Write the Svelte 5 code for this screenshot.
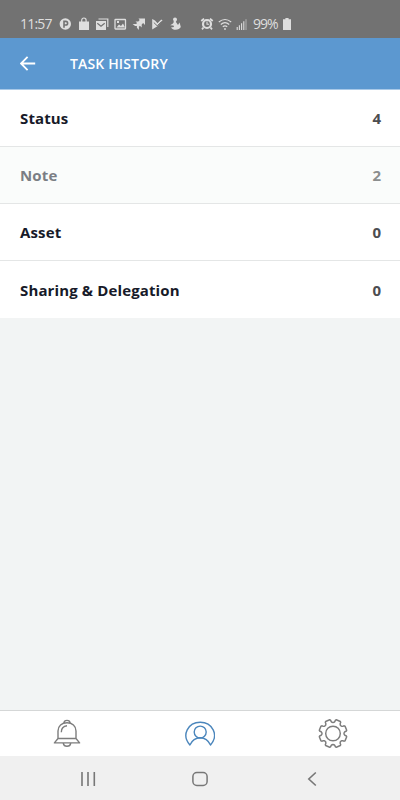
<script>
  const rows = [
    { name: 'Status', count: 4 },
    { name: 'Note', count: 2, pressed: true },
    { name: 'Asset', count: 0 },
    { name: 'Sharing & Delegation', count: 0 }
  ];

  // Cog outline: eight teeth separated by rounded valleys.
  const steps = [[-12, 13.6], [-9, 14.1], [9, 14.1], [12, 13.6], [14, 12], [18, 11.2], [22.5, 11], [27, 11.2], [31, 12]];
  const gear = Array.from({ length: 8 }, (_, i) =>
    steps.map(([a, r]) => {
      const t = ((i * 45 + 22.5 + a) * Math.PI) / 180;
      return `${(15 + r * Math.sin(t)).toFixed(2)},${(14.5 - r * Math.cos(t)).toFixed(2)}`;
    }).join(' ')
  ).join(' ');
</script>

<main class="screen">
  <div class="status">
    <span class="time">11:57</span>
    <svg class="notes" width="126" height="14" viewBox="0 0 126 14" fill="#dedede">
      <circle cx="6.3" cy="7" r="5.7" />
      <path d="M5 10.8V4.4h1.8a1.8 1.8 0 010 3.6H5" fill="none" stroke="#727272" stroke-width="1.6" />
      <path d="M20 4.5h10V13H20z" /><path d="M22.7 5V3.2a2.2 2.2 0 014.4 0v2" fill="none" stroke="#dedede" stroke-width="1.2" />
      <path d="M39.5 2h9.3v8" fill="none" stroke="#dedede" stroke-width="1.2" />
      <path d="M37 4h10v9H37z" /><path d="M38.3 6.3l3.7 3 3.7-3" fill="none" stroke="#727272" stroke-width="1.2" />
      <rect x="56" y="2.5" width="10.5" height="9.5" rx=".5" fill="none" stroke="#dedede" stroke-width="1.3" />
      <path d="M57.5 10.5l2.5-3 2 1.6 2-2.6 2 4zM58 4h2v2h-2z" />
      <path d="M79.5 1.5H86V8l-1.9-1.9-1.4 1.4v3l-1.8-1.8-1 1V13l-2-2.3V8.9h-1.8L73.6 7h3.5l1-1-1.6-1.6h2.8l1.4-1.4z" />
      <path d="M93.2 2l2.8 1.6 2.5 2.6 3.8-3.8 1.2 1.2L98.8 9 93.2 12.6z" /><path d="M94.8 5.5l3.4 3.3 4.5-4.3" fill="none" stroke="#727272" stroke-width="1" />
      <path d="M114 2.5a2 2 0 014 0c0 1.2-.7 1.7-1.2 2.3l2.2 3.2 1.6-2.5 1.2 4.5c-1.2 3-7.6 4-9.8.4l3-.4-.5-1.6-3.3-.2 2.7-1.8c1-.7 1.2-2.1.1-3.9z" />
    </svg>
    <svg class="signals" width="48" height="14" viewBox="0 0 48 14" fill="none" stroke="#dedede">
      <circle cx="7" cy="7" r="4" stroke-width="2.2" /><path d="M7 4.5V7.3h2" stroke-width="1.1" />
      <path d="M1.3 4L4 1.6M10 1.6L12.7 4M3.5 10.5L2 12.3M10.5 10.5l1.5 1.8" stroke-width="1.8" />
      <path d="M18.8 5q6.2-5 12.4 0M20.8 7.5q4.2-3.6 8.4 0M22.8 9.8q2.2-2 4.4 0" stroke-width="1.2" />
      <circle cx="25" cy="12" r=".9" fill="#dedede" stroke="none" />
      <path d="M37.2 10v3M39.4 8.3V13M41.6 6.3V13M43.8 4.3V13" stroke-width="1.1" /><path d="M46 2.2V13" stroke-width="1" opacity=".6" />
    </svg>
    <span class="battery">99%</span>
    <svg class="cell" width="8" height="12" viewBox="0 0 8 12" fill="#dedede"><path d="M2.4 0h3.2v1.2H8V12H0V1.2h2.4z" /></svg>
  </div>

  <header>
    <svg width="16" height="15" viewBox="0 0 16 15" fill="none" stroke="#fff" stroke-width="1.8"><path d="M15.2 7.5H1.2M7.6 .8L1 7.5l6.6 6.7" /></svg>
    <h1>TASK HISTORY</h1>
  </header>

  <section>
    {#each rows as row}
      <div class="row" class:pressed={row.pressed}>
        <span>{row.name}</span><span class="count">{row.count}</span>
      </div>
    {/each}
  </section>

  <nav class="tabs">
    <svg width="30" height="30" viewBox="0 0 30 30" fill="none" stroke="#7d7d7d" stroke-width="1.4" stroke-linejoin="round">
      <path d="M12 3.8C12.2.5 17.8.5 18 3.8M6 19.5V12C6 7 9.8 3.8 15 3.8S24 7 24 12v7.5l3.6 4.4H2.4L6 19.500zM6 19.500h18M11.3 24.300c.6 4 6.800 4 7.400 0M9.300 13.200C9.300 9.200 11.500 7.200 15 6.800" />
    </svg>
    <svg width="30" height="30" viewBox="0 0 30 30" fill="none" stroke="#4b86bc" stroke-width="1.4" stroke-linejoin="round">
      <circle cx="15.2" cy="13.1" r="6" /><path d="M4.900 26C-4 16 3.200 3.200 15.200 3.200S34.400 16 25.500 26C21 16.300 9.400 16.300 4.900 26z" />
    </svg>
    <svg width="30" height="30" viewBox="0 0 30 30" fill="none" stroke="#7d7d7d" stroke-width="1.45" stroke-linejoin="round">
      <polygon points={gear} /><circle cx="15" cy="14.5" r="7.3" />
    </svg>
  </nav>

  <div class="system">
    <svg width="16" height="16" viewBox="0 0 16 16" fill="none" stroke="#777" stroke-width="1.6"><path d="M2 1v14M8 1v14M14.3 1v14" /></svg>
    <svg width="16" height="16" viewBox="0 0 16 16" fill="none" stroke="#777" stroke-width="1.5"><rect x=".9" y="1.5" width="14.2" height="13" rx="4" /></svg>
    <svg width="16" height="16" viewBox="0 0 16 16" fill="none" stroke="#777" stroke-width="1.6"><path d="M11.8 1.500L4.800 8l7 6.500" /></svg>
  </div>
</main>

<style>
  .screen {
    width: 400px;
    height: 800px;
    display: flex;
    flex-direction: column;
    background: #f2f4f4;
    font-family: "Open Sans", sans-serif;
    overflow: hidden;
  }
  svg { display: block; flex: none; }
  .status {
    box-sizing: border-box;
    height: 38px;
    padding: 10px 0 0 20px;
    display: flex;
    align-items: center;
    background: #727272;
    color: #dedede;
    font: 14px/20px "Open Sans", sans-serif;
  }
  .time { width: 39px; letter-spacing: -0.8px; }
  .notes { margin-top: -1px; }
  .signals { margin: -1px 0 0 15px; }
  .battery { width: 34px; box-sizing: border-box; padding-left: 5px; font-size: 14px; letter-spacing: -1px; white-space: nowrap; }
  .cell { margin: -1px 0 0 1px; }
  header {
    box-sizing: border-box;
    height: 52px;
    padding-left: 20px;
    display: flex;
    align-items: center;
    background: #5c98d0;
    border-bottom: 1px solid #a9c9e8;
  }
  h1 {
    margin: 0 0 0 34px;
    color: #fff;
    font: 600 14px/20px "Open Sans", sans-serif;
    letter-spacing: 0.15px;
  }
  .row {
    box-sizing: border-box;
    height: 57px;
    padding: 0 19px 0 20px;
    display: flex;
    justify-content: space-between;
    align-items: center;
    background: #fff;
    border-bottom: 1px solid #e4e6e6;
    color: #171a29;
    font-size: 15px;
    font-weight: 700;
    line-height: 20px;
    letter-spacing: 0.13px;
  }
  .row:last-child { border-bottom: 0; }
  .count { color: #4c4d50; letter-spacing: 0; }
  .pressed { background: #fafcfb; color: #7a7e84; }
  .pressed .count { color: #8b8e8e; }
  .tabs {
    box-sizing: border-box;
    height: 46px;
    margin-top: auto;
    display: grid;
    grid-template-columns: repeat(3, 1fr);
    place-items: center;
    background: #fff;
    border-top: 1px solid #d5d7d7;
  }
  .system {
    box-sizing: border-box;
    height: 44px;
    padding: 2px 32px 0;
    display: grid;
    grid-template-columns: repeat(3, 1fr);
    place-items: center;
    background: #f0f0f0;
  }
</style>
